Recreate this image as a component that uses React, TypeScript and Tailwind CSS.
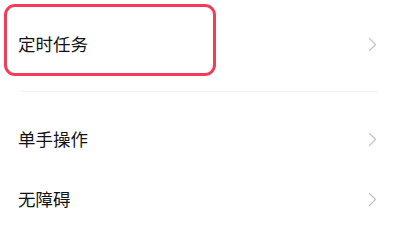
const font = { fontFamily: '"Noto Sans CJK SC", "Noto Sans", sans-serif' };

function Chevron() {
  return (
    <svg width="9" height="15" viewBox="0 0 9 15" fill="none" className="shrink-0">
      <path d="M1.5 1.5L7.5 7.5L1.5 13.5" stroke="#c4c4c4" strokeWidth="1.3" strokeLinecap="round" strokeLinejoin="round" />
    </svg>
  );
}

function Row({ label }: { label: string }) {
  return (
    <div className="flex h-[60px] items-center justify-between pl-[18px] pr-[19px]">
      <span className="text-[17.5px] leading-none text-[#141414]">{label}</span>
      <Chevron />
    </div>
  );
}

export default function App() {
  return (
    <div className="relative h-[215px] w-[396px] overflow-hidden bg-white" style={font}>
      <div className="pt-[14px]">
        <Row label="定时任务" />
      </div>
      <div className="mt-[17px] ml-[20px] mr-[19px] h-px bg-[#efefef]" />
      <div className="pt-[17px]">
        <Row label="单手操作" />
        <Row label="无障碍" />
      </div>
      <div className="absolute left-[4px] top-[4px] h-[72px] w-[212px] rounded-[11px] border-[3.5px] border-[#f33d58]" />
    </div>
  );
}
